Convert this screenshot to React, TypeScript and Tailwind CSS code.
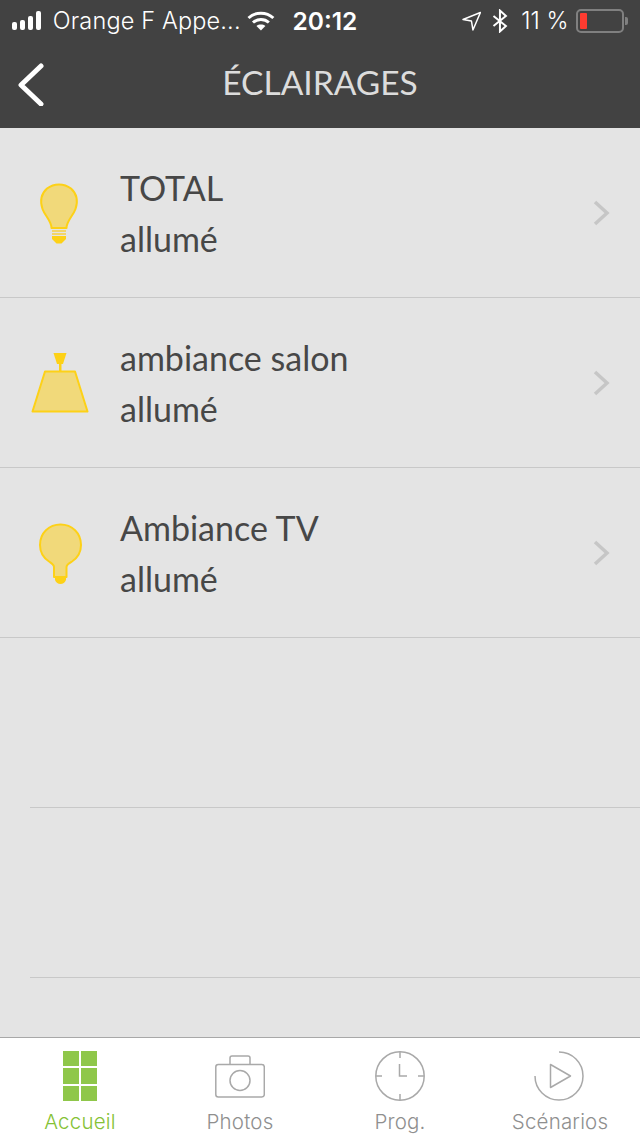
const bulbStroke = "#fdd117";
const bulbFill = "#f1d97a";

const BulbIcon = () => (
  <svg width="60" height="80" viewBox="0 0 60 80" fill="none">
    <path
      d="M21.500 55 C21.500 48 15 43 12.500 36 C9.500 27 12 20 17 15.500 C24 10 34 10 41 15.500 C46 20 48.500 27 45.500 36 C43 43 36.500 48 36.500 55 Z"
      fill={bulbFill}
      stroke={bulbStroke}
      strokeWidth="2"
      strokeLinejoin="round"
    />
    <path d="M22 58 H36 M22 61 H36" stroke="#f6cf3f" strokeWidth="1.500" />
    <path d="M22 63 H36 V66 L31.500 70.500 H26.500 L22 66 Z" fill={bulbStroke} />
  </svg>
);

const LampIcon = () => (
  <svg width="60" height="80" viewBox="0 -2 60 80" fill="none">
    <path d="M23.500 8 H36.500 L33 19 H27 Z" fill={bulbStroke} />
    <rect x="29" y="19" width="2.500" height="7" fill={bulbStroke} />
    <path
      d="M15 26.500 H45 L57.500 66.500 H2.500 Z"
      fill={bulbFill}
      stroke={bulbStroke}
      strokeWidth="2"
      strokeLinejoin="round"
    />
  </svg>
);

const RoundBulbIcon = () => (
  <svg width="60" height="80" viewBox="0 -2 60 80" fill="none">
    <path
      d="M24 62 V52 C24 49.500 22 48.500 19 46.500 C13 42.500 10 36 10 30 C10 18 19 9.500 30.500 9.500 C42 9.500 51 18 51 30 C51 36 48 42.500 42 46.500 C38.500 48.500 36.500 49.500 36.500 52 V62 Z"
      fill={bulbFill}
      stroke={bulbStroke}
      strokeWidth="2"
      strokeLinejoin="round"
    />
    <path d="M25 62 H36 V65 C35 67.500 33 69 30.500 69 C28 69 26 67.500 25 65 Z" fill={bulbStroke} />
  </svg>
);

const rows = [
  { name: "TOTAL", icon: <BulbIcon /> },
  { name: "ambiance salon", icon: <LampIcon /> },
  { name: "Ambiance TV", icon: <RoundBulbIcon /> },
];

const App = () => {
  return (
    <div className="w-[640px] h-[1136px] flex flex-col bg-[#e4e4e4] overflow-hidden">
      {/* Header */}
      <div className="h-[128px] shrink-0 bg-[#424242] flex flex-col">
        <div className="h-[42px] flex items-center pl-[12px] pr-[12px] text-white font-['Inter',sans-serif] text-[23.500px]">
          <div className="flex items-end gap-[3px] w-[33px] h-[20px] pb-[1px]">
            <span className="w-[5px] h-[8px] rounded-[2px] bg-white" />
            <span className="w-[5px] h-[10px] rounded-[2px] bg-white" />
            <span className="w-[5px] h-[14px] rounded-[2px] bg-white" />
            <span className="w-[5px] h-[19px] rounded-[2px] bg-white" />
          </div>
          <span className="ml-[8px] w-[188px] whitespace-nowrap font-light tracking-[0.15px]">Orange F Appe...</span>
          <svg className="ml-[6px]" width="28" height="20" viewBox="0 0 28 20" fill="none" stroke="#fff" strokeWidth="3">
            <path d="M1.500 7 C8.500 0.500 19.500 0.500 26.500 7" />
            <path d="M6 11.500 C10.500 7.500 17.500 7.500 22 11.500" />
            <path d="M14 19.500 L9.500 15 C12 13 16 13 18.500 15 Z" fill="#fff" stroke="none" />
          </svg>
          <span className="ml-[18px] font-semibold text-[24.500px] w-[64px] whitespace-nowrap">20:12</span>
          <svg className="ml-[105px]" width="20" height="22" viewBox="0 0 20 20" fill="none" stroke="#fff" strokeWidth="1.500" strokeLinejoin="round">
            <path d="M1 8.500 L18.500 1.500 L11 19 L9.500 10 Z" />
          </svg>
          <svg className="ml-[11px]" width="16" height="24" viewBox="0 0 16 24" fill="none" stroke="#fff" strokeWidth="2">
            <path d="M1.500 7 L14 17 L8 22.500 V1.500 L14 7 L1.500 17" />
          </svg>
          <span className="ml-[13px] w-[50px] whitespace-nowrap font-light">11 %</span>
          <div className="ml-[5px] w-[48px] h-[24px] border-[2px] border-[#808080] rounded-[5px] p-[2px] shrink-0">
            <div className="w-[7px] h-full bg-[#ff3b30] rounded-[1px]" />
          </div>
          <div className="ml-[1px] w-[3px] h-[8px] bg-[#808080] rounded-r-[2px]" />
        </div>
        <div className="relative flex-1 flex items-center justify-center pb-[5px]">
          <svg className="absolute left-[16px] top-[20px]" width="28" height="44" viewBox="0 0 28 44" fill="none">
            <path d="M25 4 L5 23 L25 42" stroke="#fff" strokeWidth="5" strokeLinecap="round" strokeLinejoin="round" />
          </svg>
          <span className="text-[#dcdcdc] font-['Lato',sans-serif] text-[33.500px] leading-none">ÉCLAIRAGES</span>
        </div>
      </div>

      {/* List */}
      <div className="flex-1 flex flex-col">
        {rows.map((row) => (
          <div key={row.name} className="h-[170px] shrink-0 border-b border-[#c8c8c8] flex items-center pl-[30px] pr-[29px]">
            <div className="w-[60px] h-[80px] shrink-0">{row.icon}</div>
            <div className="ml-[30px] flex-1 font-['Lato',sans-serif] text-[#474747] text-[34px] leading-[51px]">
              <div>{row.name}</div>
              <div>allumé</div>
            </div>
            <svg width="20" height="30" viewBox="0 0 20 30" fill="none">
              <path d="M4 4 L16 15 L4 26" stroke="#c6c6c6" strokeWidth="3.500" />
            </svg>
          </div>
        ))}
        <div className="h-[170px] shrink-0 ml-[30px] border-b border-[#c8c8c8]" />
        <div className="h-[170px] shrink-0 ml-[30px] border-b border-[#c8c8c8]" />
      </div>

      {/* Tab bar */}
      <div className="h-[99px] shrink-0 bg-white border-t-[1.500px] border-[#a8a8a8] grid grid-cols-4 font-['Inter',sans-serif] font-light tracking-[0.2px] text-[20.500px] text-[#8f8f8f]">
        <div className="flex flex-col items-center pt-[13px] text-[#85c236]">
          <div className="grid grid-cols-2 gap-[2px] w-[34px] h-[50px]">
            <span className="bg-[#8fc74a]" />
            <span className="bg-[#8fc74a]" />
            <span className="bg-[#8fc74a]" />
            <span className="bg-[#8fc74a]" />
            <span className="bg-[#8fc74a]" />
            <span className="bg-[#8fc74a]" />
          </div>
          <span className="mt-[8px] leading-[26px]">Accueil</span>
        </div>
        <div className="flex flex-col items-center pt-[13px]">
          <svg width="50" height="50" viewBox="0 0 50 50" fill="none" stroke="#a9a9a9" strokeWidth="1.500">
            <rect x="0.800" y="13.500" width="48.500" height="32.500" rx="2.500" />
            <circle cx="25" cy="29.500" r="10" />
            <path d="M15 13.500 V7 Q15 5 17 5 H33 Q35 5 35 7 V13.500" />
          </svg>
          <span className="mt-[8px] leading-[26px]">Photos</span>
        </div>
        <div className="flex flex-col items-center pt-[13px]">
          <svg width="50" height="50" viewBox="0 0 50 50" fill="none" stroke="#a9a9a9" strokeWidth="1.500">
            <circle cx="25" cy="25" r="24.200" />
            <path d="M25 1 V7 M25 43 V49 M1 25 H7 M43 25 H49" />
            <path d="M24.500 13 V25 H32" />
          </svg>
          <span className="mt-[8px] leading-[26px]">Prog.</span>
        </div>
        <div className="flex flex-col items-center pt-[13px]">
          <svg className="-ml-[2px]" width="50" height="50" viewBox="0 0 50 50" fill="none" stroke="#a9a9a9" strokeWidth="1.500">
            <path d="M25 1 A24 24 0 1 1 1 25" />
            <path d="M16.500 13.500 L36.500 25 L16.500 36.500 Z" strokeLinejoin="round" />
          </svg>
          <span className="mt-[8px] leading-[26px]">Scénarios</span>
        </div>
      </div>
    </div>
  );
};

export default App;
